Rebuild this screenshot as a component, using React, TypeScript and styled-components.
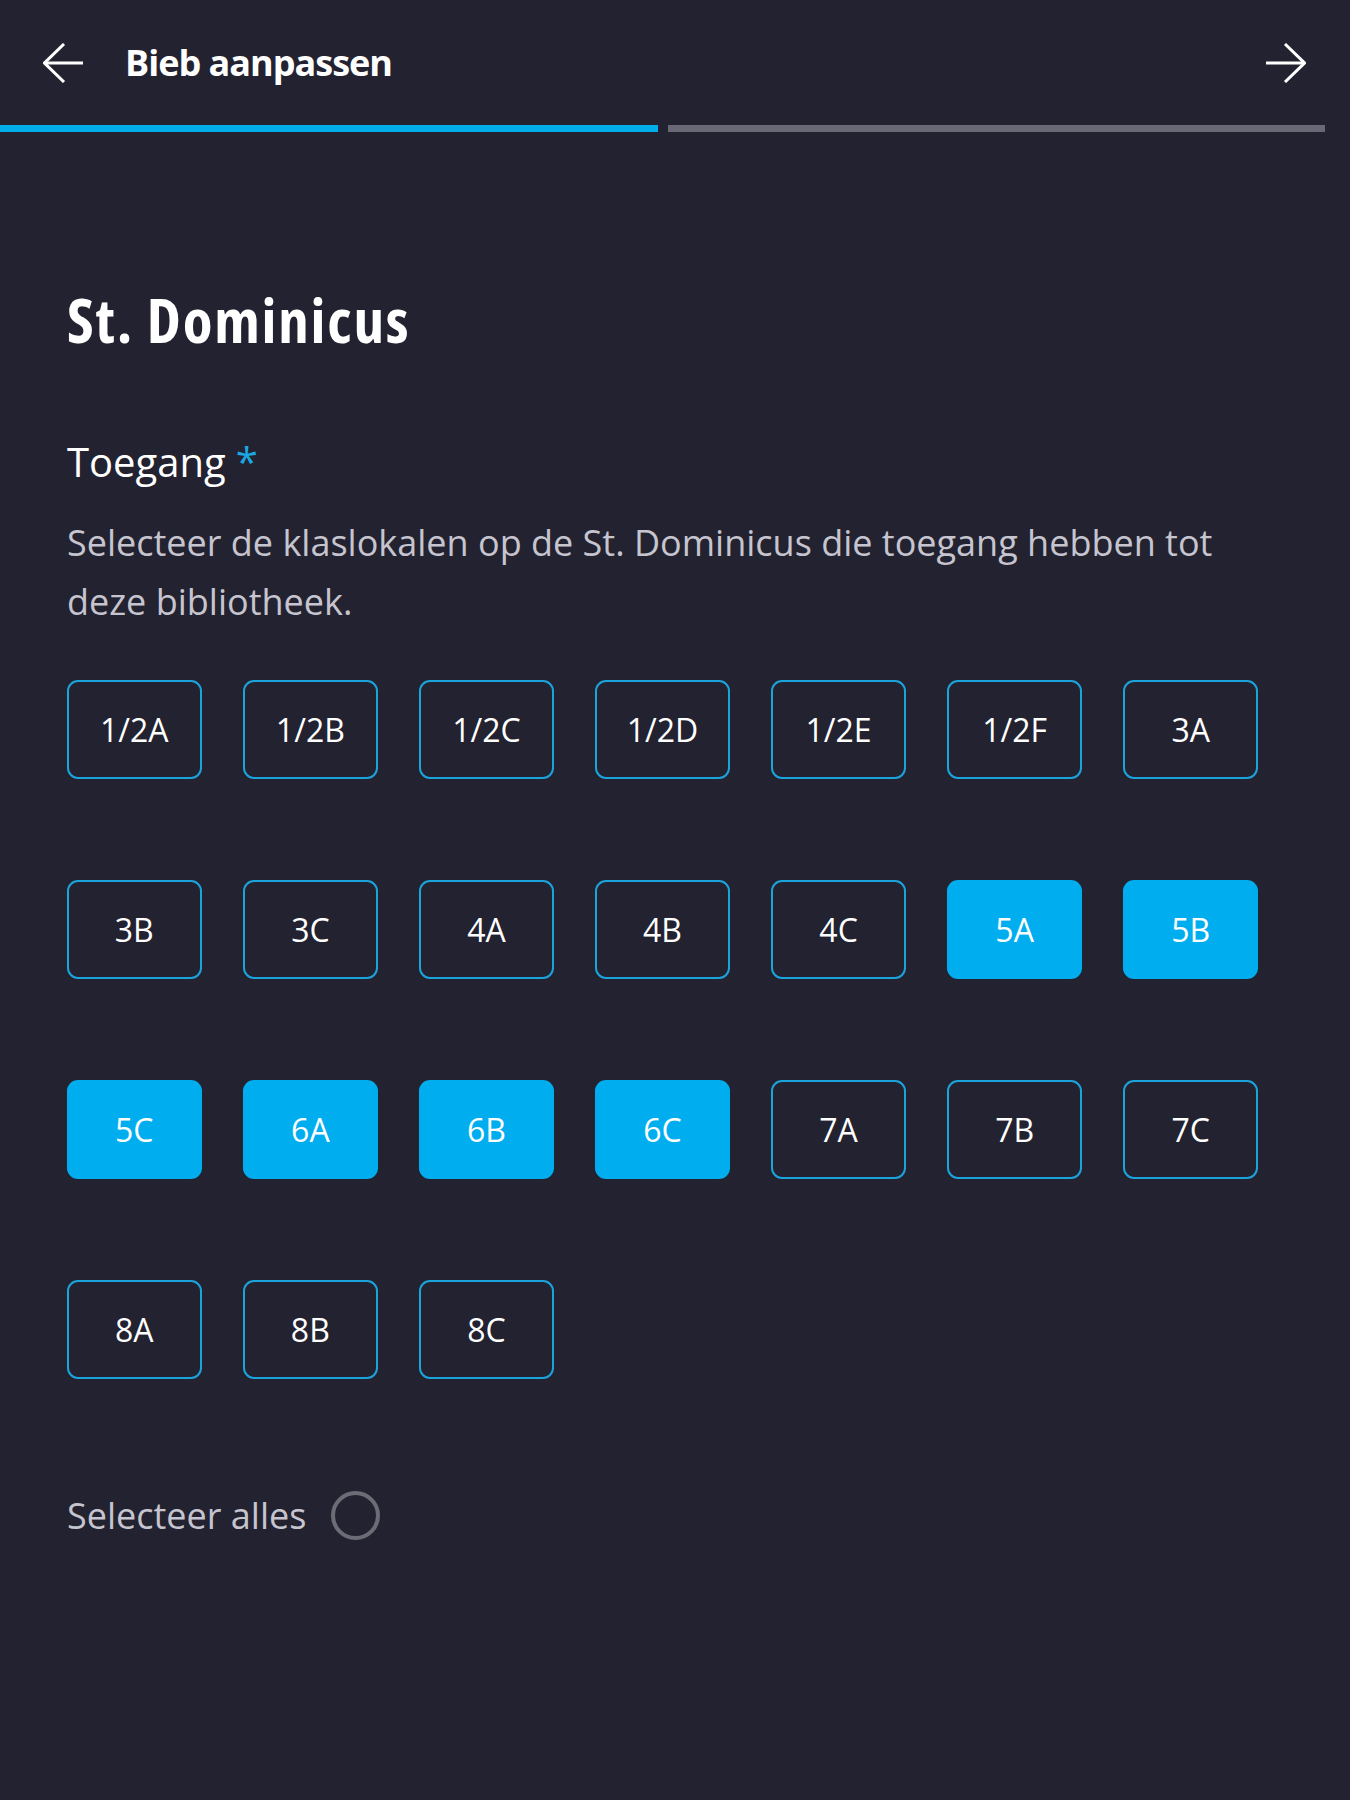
import React, { useState } from "react";
import styled, { createGlobalStyle } from "styled-components";

const GlobalStyle = createGlobalStyle`
  html, body {
    margin: 0;
    padding: 0;
    background: #232230;
  }
  body {
    font-family: "Open Sans", "Noto Sans", sans-serif;
    color: #ffffff;
    min-height: 1800px;
  }
  * { box-sizing: border-box; }
`;

const Page = styled.div`
  width: 1325px;
  min-height: 1800px;
  background: #232230;
`;

const Header = styled.header`
  height: 125px;
  display: flex;
  align-items: center;
  padding: 0 19px 0 43px;
`;

const IconButton = styled.button`
  width: 40px;
  height: 40px;
  padding: 0;
  border: none;
  background: transparent;
  display: flex;
  align-items: center;
  justify-content: center;
  cursor: pointer;
`;

const HeaderTitle = styled.h1`
  flex: 1;
  margin: 0 0 0 42px;
  font-family: "Open Sans", "Noto Sans", sans-serif;
  font-weight: 700;
  font-size: 36px;
  line-height: 36px;
  font-stretch: 88%;
  letter-spacing: -1px;
  color: #ffffff;
`;

const Progress = styled.div`
  display: flex;
  gap: 10px;
  height: 7px;
`;

const ProgressSegment = styled.div<{ $active: boolean }>`
  flex: 1;
  background: ${(p) => (p.$active ? "#00aee9" : "#6a6874")};
`;

const Content = styled.main`
  padding: 152px 67px 0 67px;
`;

const SchoolTitle = styled.h2`
  margin: 0;
  font-family: "Open Sans", "Noto Sans", sans-serif;
  font-weight: 700;
  font-size: 61px;
  line-height: 72px;
  font-stretch: 75%;
  letter-spacing: 1.8px;
  color: #ffffff;
`;

const FieldLabel = styled.div`
  margin-top: 78px;
  font-size: 40px;
  line-height: 56px;
  color: #ffffff;
`;

const Required = styled.span`
  color: #1ba8e2;
  margin-left: 10px;
`;

const Description = styled.p`
  margin: 23px 0 0 0;
  font-size: 36px;
  line-height: 59px;
  color: #c6c5cf;
`;

const Grid = styled.div`
  margin-top: 49px;
  display: grid;
  grid-template-columns: repeat(7, 1fr);
  column-gap: 41.5px;
  row-gap: 101.5px;
`;

const ClassButton = styled.button<{ $selected: boolean }>`
  height: 98.5px;
  border-radius: 11px;
  border: 2.5px solid ${(p) => (p.$selected ? "#00aeef" : "#1ba4dc")};
  background: ${(p) => (p.$selected ? "#00aeef" : "transparent")};
  color: #ffffff;
  font-family: "Open Sans", "Noto Sans", sans-serif;
  font-size: 32px;
  padding: 0;
  display: flex;
  align-items: center;
  justify-content: center;
  cursor: pointer;
`;

const SelectAllRow = styled.label`
  margin-top: 109px;
  height: 56px;
  display: flex;
  align-items: center;
  gap: 25px;
  font-size: 36px;
  color: #c6c5cf;
  cursor: pointer;
`;

const Radio = styled.span<{ $checked: boolean }>`
  width: 49px;
  height: 49px;
  border-radius: 50%;
  border: 4px solid ${(p) => (p.$checked ? "#00aeef" : "#6c6b76")};
  background: ${(p) => (p.$checked ? "#00aeef" : "transparent")};
`;

const ArrowLeft = () => (
  <svg width="40" height="40" viewBox="0 0 40 40" fill="none" stroke="#ffffff" strokeWidth="3" strokeLinecap="butt" strokeLinejoin="miter">
    <path d="M1.5 20 H40" />
    <path d="M21 1 L1.5 20 L21 39" />
  </svg>
);

const ArrowRight = () => (
  <svg width="40" height="40" viewBox="0 0 40 40" fill="none" stroke="#ffffff" strokeWidth="3" strokeLinecap="butt" strokeLinejoin="miter">
    <path d="M0 20 H38.5" />
    <path d="M19 1 L38.5 20 L19 39" />
  </svg>
);

const CLASSES = [
  "1/2A", "1/2B", "1/2C", "1/2D", "1/2E", "1/2F", "3A",
  "3B", "3C", "4A", "4B", "4C", "5A", "5B",
  "5C", "6A", "6B", "6C", "7A", "7B", "7C",
  "8A", "8B", "8C",
];

export default function App() {
  const [selected, setSelected] = useState<string[]>(["5A", "5B", "5C", "6A", "6B", "6C"]);
  const allSelected = selected.length === CLASSES.length;

  const toggle = (c: string) =>
    setSelected((s) => (s.includes(c) ? s.filter((x) => x !== c) : [...s, c]));

  return (
    <>
      <GlobalStyle />
      <Page>
        <Header>
          <IconButton aria-label="Terug">
            <ArrowLeft />
          </IconButton>
          <HeaderTitle>Bieb aanpassen</HeaderTitle>
          <IconButton aria-label="Volgende">
            <ArrowRight />
          </IconButton>
        </Header>
        <Progress>
          <ProgressSegment $active />
          <ProgressSegment $active={false} />
        </Progress>
        <Content>
          <SchoolTitle>St. Dominicus</SchoolTitle>
          <FieldLabel>
            Toegang<Required>*</Required>
          </FieldLabel>
          <Description>
            Selecteer de klaslokalen op de St. Dominicus die toegang hebben tot deze bibliotheek.
          </Description>
          <Grid>
            {CLASSES.map((c) => (
              <ClassButton key={c} $selected={selected.includes(c)} onClick={() => toggle(c)}>
                {c}
              </ClassButton>
            ))}
          </Grid>
          <SelectAllRow onClick={() => setSelected(allSelected ? [] : [...CLASSES])}>
            Selecteer alles
            <Radio $checked={allSelected} />
          </SelectAllRow>
        </Content>
      </Page>
    </>
  );
}
